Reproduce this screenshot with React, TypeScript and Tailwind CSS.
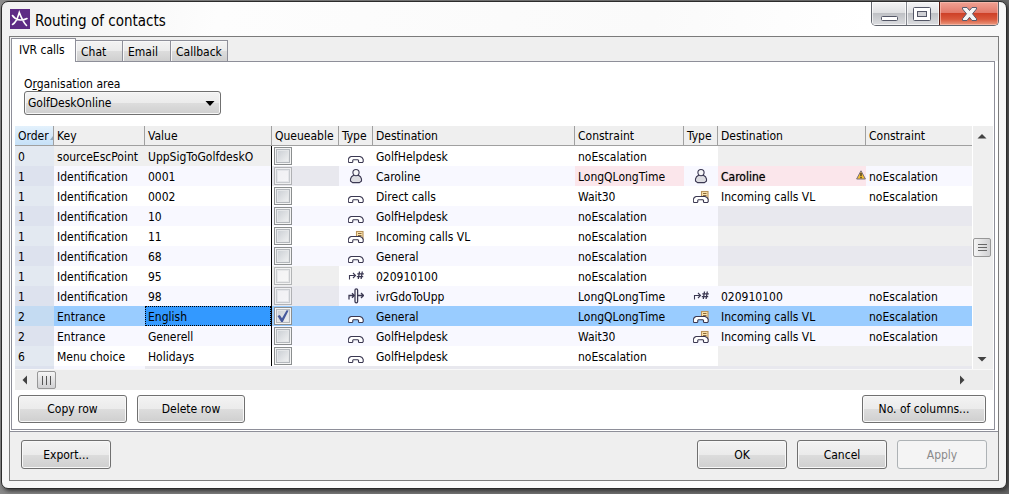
import React from "react";

type IconKind = "phone" | "user" | "note" | "number" | "transfer";

type Row = {
  order: string;
  key: string;
  value: string;
  queue: "on" | "off" | "disabled";
  type: IconKind;
  dest: string;
  constraint: string;
  type2?: IconKind;
  dest2?: string;
  constraint2?: string;
  warn?: boolean;
  selected?: boolean;
  fixed?: boolean;
};

const rows: Row[] = [
  { order: "0", key: "sourceEscPoint", value: "UppSigToGolfdeskO", queue: "off", type: "phone", dest: "GolfHelpdesk", constraint: "noEscalation", fixed: true },
  { order: "1", key: "Identification", value: "0001", queue: "disabled", type: "user", dest: "Caroline", constraint: "LongQLongTime", type2: "user", dest2: "Caroline", constraint2: "noEscalation", warn: true },
  { order: "1", key: "Identification", value: "0002", queue: "off", type: "phone", dest: "Direct calls", constraint: "Wait30", type2: "note", dest2: "Incoming calls VL", constraint2: "noEscalation" },
  { order: "1", key: "Identification", value: "10", queue: "off", type: "phone", dest: "GolfHelpdesk", constraint: "noEscalation" },
  { order: "1", key: "Identification", value: "11", queue: "off", type: "note", dest: "Incoming calls VL", constraint: "noEscalation" },
  { order: "1", key: "Identification", value: "68", queue: "off", type: "phone", dest: "General", constraint: "noEscalation" },
  { order: "1", key: "Identification", value: "95", queue: "disabled", type: "number", dest: "020910100", constraint: "noEscalation" },
  { order: "1", key: "Identification", value: "98", queue: "disabled", type: "transfer", dest: "ivrGdoToUpp", constraint: "LongQLongTime", type2: "number", dest2: "020910100", constraint2: "noEscalation" },
  { order: "2", key: "Entrance", value: "English", queue: "on", type: "phone", dest: "General", constraint: "LongQLongTime", type2: "note", dest2: "Incoming calls VL", constraint2: "noEscalation", selected: true },
  { order: "2", key: "Entrance", value: "Generell", queue: "off", type: "phone", dest: "GolfHelpdesk", constraint: "Wait30", type2: "note", dest2: "Incoming calls VL", constraint2: "noEscalation" },
  { order: "6", key: "Menu choice", value: "Holidays", queue: "off", type: "phone", dest: "GolfHelpdesk", constraint: "noEscalation" },
];

const HANDSET =
  "M3 10.5H12L14 11.5L15.2 13.5V15.5L14.5 16.5H11L10.5 15.8V14.2L9.8 13.7H5.4L4.8 14.2V15.8L4.2 16.5H0.9L0.3 15.5V13.5L1.3 11.5Z";

function TypeIcon({ kind }: { kind: IconKind }) {
  return (
    <svg viewBox="0 0 16 20" className="mx-auto block h-5 w-4" fill="none" stroke="#3b3852" strokeWidth="1.1" aria-label={kind}>
      {kind === "phone" && <path d={HANDSET} fill="#fff" />}
      {kind === "note" && (
        <>
          <rect x="8.5" y="5.5" width="6.5" height="8" fill="#fbe3ae" stroke="#b8935a" />
          <path d="M10 7.5H13.5M10 9.5H13.5" stroke="#8a6a3c" />
          <path d={HANDSET} fill="#fff" />
        </>
      )}
      {kind === "user" && (
        <>
          <path d="M6 9L3.5 10.8L2.5 13V15L4.5 16.6H11.5L13.5 15V13L12.5 10.8L10 9Z" fill="#dcdce1" strokeLinejoin="round" />
          <circle cx="8" cy="6.6" r="3.1" fill="#f6f6f8" />
        </>
      )}
      {kind === "number" && (
        <>
          <path d="M1.5 13.5V9.5H6.5M5 7L7.5 9.5L5 12" />
          <path d="M11.5 5.5L10.3 13M14.3 5.5L13.1 13M9.3 7.8H15.8M8.8 10.6H15.2" strokeWidth="1.3" />
        </>
      )}
      {kind === "transfer" && (
        <>
          <path d="M1 13.5V9.5H5.5M4 7.2L6.3 9.5L4 11.8M10 9.5H15M13 7L15.5 9.5L13 12" strokeWidth="1.3" />
          <rect x="7" y="2.8" width="2.6" height="14" rx="1.3" fill="#fff" strokeWidth="1.3" />
        </>
      )}
    </svg>
  );
}

function QueueBox({ state, label }: { state: Row["queue"]; label: string }) {
  return (
    <span className={"relative ml-[2px] block h-[18px] w-[18px] " + (state === "disabled" ? "opacity-60" : "")}>
      <input
        type="checkbox"
        aria-label={label}
        defaultChecked={state === "on"}
        disabled={state === "disabled"}
        className="peer block h-[18px] w-[18px] appearance-none border border-[#8b8e8f] bg-linear-to-br from-[#c3c8ce] to-[#f8f8f8] shadow-[inset_0_0_0_1px_#f4f4f4,inset_0_0_0_2px_#b4b8bd,inset_0_0_0_3px_#e4e6e8] disabled:from-[#f4f4f6] disabled:to-white"
      />
      <svg viewBox="0 0 18 18" className="pointer-events-none absolute inset-0 hidden h-[18px] w-[18px] peer-checked:block" fill="#46599c">
        <path d="M3.5 9L5.8 8L8 11.2L12.6 3.2L14.6 3.6L8.8 15H7.2Z" />
      </svg>
    </span>
  );
}

const TH = "h-5 border-r border-b border-[#a0a0a0] bg-[#efefef] pl-[3px] text-left font-normal";
const TD = "h-5 overflow-hidden pt-[2px] pl-[3px]";

function TableRow({ row, index }: { row: Row; index: number }) {
  const odd = index % 2 === 1;
  const base = row.selected ? "bg-[#99ccff]" : odd ? "bg-[#f8f8ff]" : "bg-white";
  const off = odd ? "bg-[#e8e8ee]" : "bg-[#efefef]";
  const orderBg = row.selected ? "bg-[#c4dbf2]" : odd ? "bg-[#dde2ee]" : "bg-[#e3e9f1]";
  return (
    <tr className={base}>
      <td className={TD + " " + orderBg}>{row.order}</td>
      <td className={TD + (row.fixed ? " bg-[#efefef]" : "")}>{row.key}</td>
      <td className={"h-5 overflow-hidden border-r border-black" + (row.fixed ? " bg-[#efefef]" : "")}>
        <div className={row.selected ? "h-5 border border-dotted border-black bg-[#3399ff] pt-px pl-[2px]" : "pt-[2px] pl-[3px]"}>{row.value}</div>
      </td>
      <td className={row.queue === "disabled" ? off : ""}>
        <QueueBox state={row.queue} label={"Queueable " + row.value} />
      </td>
      <td><TypeIcon kind={row.type} /></td>
      <td className={TD}>{row.dest}</td>
      <td className={TD + (row.warn ? " bg-[#fbe6eb]" : "")}>{row.constraint}</td>
      <td>{row.type2 && <TypeIcon kind={row.type2} />}</td>
      <td className={TD + " " + (row.warn ? "bg-[#fbe6eb]" : row.dest2 ? "" : off)}>
        {row.warn ? (
          <div className="flex justify-between">
            <span className="[text-shadow:0_0_1px_#00000099]">{row.dest2}</span>
            <svg viewBox="0 0 10 10" className="mt-[2px] h-[10px] w-[10px]" aria-label="Warning">
              <path d="M5 0.8L9.4 9H0.6Z" fill="#f5bd2e" stroke="#777080" strokeLinejoin="round" />
              <path d="M5 3V6.2M5 7V8.2" stroke="#2a2420" strokeWidth="1.2" />
            </svg>
          </div>
        ) : (
          row.dest2
        )}
      </td>
      <td className={TD + " " + (row.constraint2 ? "" : off)}>{row.constraint2}</td>
    </tr>
  );
}

const FACE =
  "rounded-[3px] border border-[#707070] bg-[linear-gradient(#f3f3f3,#ebebeb_50%,#dddddd_50%,#cfcfcf)] shadow-[inset_0_0_0_1px_#f8f8f8] text-center";

function Tab({ children, width }: { children: string; width: string }) {
  return (
    <button
      type="button"
      role="tab"
      aria-selected={false}
      className={"h-[21px] border-t border-r border-[#8e8f99] bg-[linear-gradient(#f3f3f3,#ebebeb_50%,#dddddd_50%,#cfcfcf)] pl-[5px] text-left leading-[22px] shadow-[inset_1px_1px_0_#f8f8f8] " + width}
    >
      {children}
    </button>
  );
}

function Arrow({ d, label }: { d: string; label: string }) {
  return (
    <button type="button" aria-label={label} className="flex h-[19px] w-[19px] items-center justify-center">
      <svg viewBox="0 0 10 10" className="h-[10px] w-[10px]" fill="#424242"><path d={d} /></svg>
    </button>
  );
}

export default function App() {
  return (
    <div className="min-h-screen bg-[linear-gradient(100deg,#8c8c8c,#777_50%,#666)] pt-px pr-[2px] pb-[5px] pl-px font-['DejaVu_Sans_Condensed','DejaVu_Sans','Noto_Sans',sans-serif] text-[12px] leading-5 text-black">
      <main className="rounded-[7px] border border-[#2b2b2b] bg-[linear-gradient(100deg,#f1f1f1,#fdfdfd_20%,#fafafa_60%,#ffffff_80%,#f3f3f3)] px-[7px] pb-[7px] shadow-[2px_2px_4px_#333]">
        <header className="flex h-[34px] items-start">
          <svg viewBox="0 0 20 20" className="mt-[7px] ml-px h-5 w-5" aria-hidden="true">
            <rect width="20" height="20" fill="#5e2b85" />
            <path d="M2.5 15.5C5.5 14 8 8 9.3 3.5C11 8 13.5 13.5 16.5 16.5M2.5 6.5C5.5 11.5 12 12 17 9.5" fill="none" stroke="#fff" strokeWidth="1.6" strokeLinecap="round" />
          </svg>
          <h1 className="mt-2 ml-[5px] text-[15px] leading-[22px] font-normal">Routing of contacts</h1>
          <div className="ml-auto flex h-6 overflow-hidden rounded-b-[5px] border border-t-0 border-[#60646c]">
            <button type="button" aria-label="Minimise" className="w-[35px] border-r border-[#85888f] bg-[linear-gradient(#f4f4f5,#dedfe1_50%,#bfc1c5_50%,#dcdde0)] shadow-[inset_0_0_0_1px_#ffffffaa]">
              <svg viewBox="0 0 34 23" className="h-[23px] w-[34px]"><rect x="9.5" y="14.5" width="16" height="4" rx="1" fill="#fff" stroke="#535666" /></svg>
            </button>
            <button type="button" aria-label="Maximise" className="w-[33px] border-r border-[#5a1d14] bg-[linear-gradient(#f4f4f5,#dedfe1_50%,#bfc1c5_50%,#dcdde0)] shadow-[inset_0_0_0_1px_#ffffffaa]">
              <svg viewBox="0 0 32 23" className="h-[23px] w-8">
                <rect x="6.5" y="5.5" width="17" height="13" rx="1" fill="#fff" stroke="#535666" />
                <rect x="10.5" y="9.5" width="9" height="5" fill="#d0d1d5" stroke="#535666" />
              </svg>
            </button>
            <button type="button" aria-label="Close" className="w-[58px] bg-[linear-gradient(#f0a294,#e2796a_48%,#ce4128_50%,#d9583c_75%,#eb9a80)] shadow-[inset_0_0_0_1px_#f7c0b4aa]">
              <svg viewBox="0 0 58 23" className="h-[23px] w-[58px]">
                <path d="M22.5 5.5H27L29.5 8.5L32 5.5H36.5V7L32.5 11.8L36.5 16.8V18.5H32L29.5 15.3L27 18.5H22.5V16.8L26.5 11.8L22.5 7Z" fill="#f4f4f4" stroke="#585b6e" strokeLinejoin="round" />
              </svg>
            </button>
          </div>
        </header>

        <div className="border border-[#7b7b7b] bg-white">
          <div role="tablist" className="flex h-6 items-end bg-[#efefef] pl-px">
            <button type="button" role="tab" aria-selected={true} className="relative z-10 -mb-px h-6 w-[65px] border border-b-0 border-[#8e8f99] bg-white pb-px pl-[7px] text-left leading-5">
              IVR calls
            </button>
            <Tab width="w-[47px]">Chat</Tab>
            <Tab width="w-12">Email</Tab>
            <Tab width="w-[57px]">Callback</Tab>
          </div>

          <section className="mr-[3px] mb-px ml-px border border-[#8e8f99] bg-white pr-px pb-[6px] pl-[3px]">
            <div className="pt-[15px] pb-[11px] pl-[9px]">
              <label htmlFor="area" className="block h-[14px] leading-[14px]">
                O<u>r</u>ganisation area
              </label>
              <div className="relative w-[197px]">
                <select id="area" className={"block h-6 w-full appearance-none pl-[3px] text-left " + FACE}>
                  <option>GolfDeskOnline</option>
                </select>
                <svg viewBox="0 0 10 6" className="pointer-events-none absolute top-[10px] right-[6px] h-[6px] w-[10px]"><path d="M0.5 0H9.5L5 5Z" /></svg>
              </div>
            </div>

            <div className="flex">
              <div className="h-[243px] min-w-0 flex-1 overflow-hidden">
                <table className="w-full table-fixed border-separate border-spacing-0 leading-[18px] whitespace-nowrap [&_td]:pr-0 [&_td]:pb-0 [&_th]:pr-0 [&_th]:pb-0">
                  <colgroup>
                    <col className="w-[39px]" />
                    <col className="w-[91px]" />
                    <col className="w-[127px]" />
                    <col className="w-[67px]" />
                    <col className="w-[34px]" />
                    <col className="w-[202px]" />
                    <col className="w-[109px]" />
                    <col className="w-[34px]" />
                    <col className="w-[148px]" />
                    <col />
                  </colgroup>
                  <thead className="[&_th]:pt-px">
                    <tr>
                      <th className="h-5 border-r border-b border-[#a0a0a0] bg-linear-to-b from-[#e3f1fc] to-[#c6e1f8] pl-[3px] text-left font-normal">
                        <div className="flex items-center justify-between">
                          Order
                          <svg viewBox="0 0 3 4" className="mt-1 h-1 w-[3px] shrink-0" aria-hidden="true"><path d="M3 0V4H0Z" fill="#8fa9bd" /></svg>
                        </div>
                      </th>
                      <th className={TH}>Key</th>
                      <th className={TH}>Value</th>
                      <th className={TH}>Queueable</th>
                      <th className={TH}>Type</th>
                      <th className={TH}>Destination</th>
                      <th className={TH}>Constraint</th>
                      <th className={TH}>Type</th>
                      <th className={TH}>Destination</th>
                      <th className="h-5 border-b border-[#a0a0a0] bg-[#efefef] pl-[3px] text-left font-normal">Constraint</th>
                    </tr>
                  </thead>
                  <tbody>
                    {rows.map((row, i) => (
                      <TableRow key={i} row={row} index={i} />
                    ))}
                    <tr className="bg-[#e8e8ee]" aria-hidden="true">
                      <td className="h-5 bg-[#dde2ee]" />
                      <td className="bg-[#f8f8ff]" />
                      <td colSpan={8} />
                    </tr>
                  </tbody>
                </table>
              </div>
              <div className="flex w-[21px] flex-col items-center border-l border-white bg-[#efefef] pr-[2px]">
                <Arrow label="Scroll up" d="M5 3L9.5 7.5H0.5Z" />
                <div className="flex flex-1 flex-col justify-center">
                  <div className="flex h-[19px] w-[18px] flex-col items-center justify-center gap-[2px] rounded-[2px] border border-[#979797] bg-linear-to-r from-[#f5f5f5] to-[#d0d0d2]">
                    <i className="h-px w-[9px] bg-[#666]" />
                    <i className="h-px w-[9px] bg-[#666]" />
                    <i className="h-px w-[9px] bg-[#666]" />
                  </div>
                </div>
                <Arrow label="Scroll down" d="M0.5 2H9.5L5 6.5Z" />
              </div>
            </div>
            <div className="flex h-[21px] items-center border-t border-[#f8f8f8] bg-[#ececec] pr-[22px]">
              <Arrow label="Scroll left" d="M7 0.5V9.5L2.5 5Z" />
              <div className="ml-[3px] flex h-[18px] w-[19px] items-center justify-center gap-[3px] rounded-[2px] border border-[#979797] bg-linear-to-b from-[#f5f5f5] to-[#d0d0d2]">
                <i className="h-[9px] w-px bg-[#555]" />
                <i className="h-[9px] w-px bg-[#555]" />
                <i className="h-[9px] w-px bg-[#555]" />
              </div>
              <div className="flex-1" />
              <Arrow label="Scroll right" d="M3 0.5V9.5L7.5 5Z" />
            </div>

            <div className="flex gap-[10px] pt-[5px] pr-[7px] pl-[3px]">
              <button type="button" className={"h-7 w-[109px] " + FACE}>Copy row</button>
              <button type="button" className={"h-7 w-[108px] " + FACE}>Delete row</button>
              <button type="button" className={"ml-auto h-7 w-[124px] " + FACE}>No. of columns...</button>
            </div>
          </section>

          <footer className="flex gap-[10px] border-t border-[#8e8f99] bg-[#efefef] px-[11px] pt-2 pb-[11px]">
            <button type="button" className={"mr-auto h-[29px] w-[90px] " + FACE}>Export...</button>
            <button type="button" className={"h-[29px] w-[90px] " + FACE}>OK</button>
            <button type="button" className={"h-[29px] w-[90px] " + FACE}>Cancel</button>
            <button type="button" disabled className="h-[29px] w-[90px] rounded-[3px] border border-[#adb2b5] bg-[#f4f4f4] text-center text-[#8a8a8a]">Apply</button>
          </footer>
        </div>
      </main>
    </div>
  );
}
